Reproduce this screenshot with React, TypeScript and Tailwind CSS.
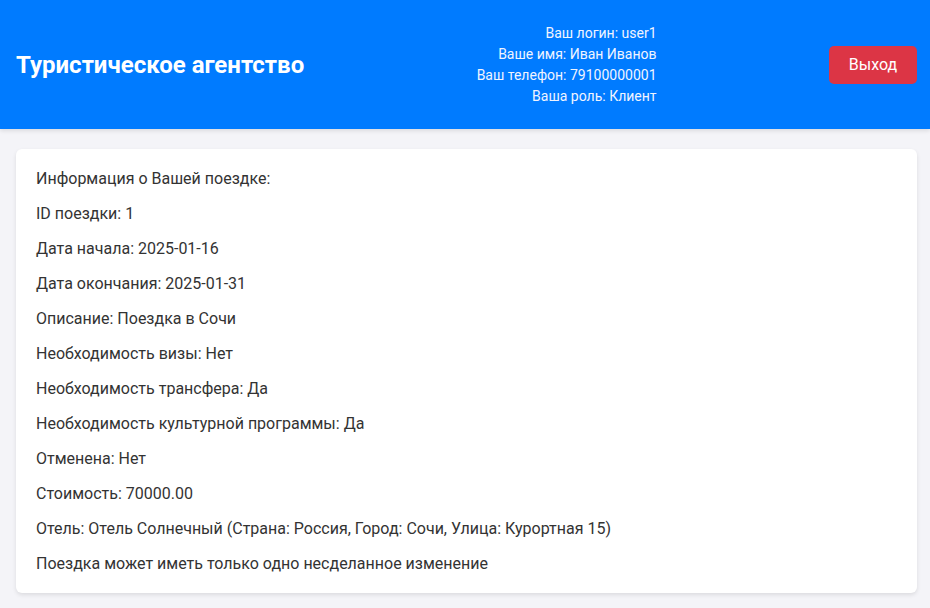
const user = {
  login: 'user1',
  name: 'Иван Иванов',
  phone: '79100000001',
  role: 'Клиент',
};

const tripLines = [
  'Информация о Вашей поездке:',
  'ID поездки: 1',
  'Дата начала: 2025-01-16',
  'Дата окончания: 2025-01-31',
  'Описание: Поездка в Сочи',
  'Необходимость визы: Нет',
  'Необходимость трансфера: Да',
  'Необходимость культурной программы: Да',
  'Отменена: Нет',
  'Стоимость: 70000.00',
  'Отель: Отель Солнечный (Страна: Россия, Город: Сочи, Улица: Курортная 15)',
  'Поездка может иметь только одно несделанное изменение',
];

export default function App() {
  return (
    <div className="min-h-screen bg-[#f4f4f8] font-['Roboto',sans-serif]">
      {/* Header */}
      <header className="flex h-[129px] items-center justify-between bg-[#007bff] pl-4 pr-[13px] shadow-[0_2px_4px_rgba(0,0,0,0.1)]">
        <h1 className="text-[24px] font-bold text-white">Туристическое агентство</h1>
        <div className="text-right text-[14px] leading-[21px] text-[#f0f4ff]">
          <div>Ваш логин: {user.login}</div>
          <div>Ваше имя: {user.name}</div>
          <div>Ваш телефон: {user.phone}</div>
          <div>Ваша роль: {user.role}</div>
        </div>
        <button className="h-[38px] w-[88px] rounded-[5px] bg-[#dc3545] text-[16px] text-white">
          Выход
        </button>
      </header>

      {/* Trip info */}
      <main className="pl-4 pr-[13px] pt-5 pb-4">
        <div className="flex flex-col gap-4 rounded-[6px] bg-white p-5 text-[16px] leading-[19px] text-[#333333] shadow-[0_2px_4px_rgba(0,0,0,0.1)]">
          {tripLines.map((line) => (
            <p key={line}>{line}</p>
          ))}
        </div>
      </main>
    </div>
  );
}
